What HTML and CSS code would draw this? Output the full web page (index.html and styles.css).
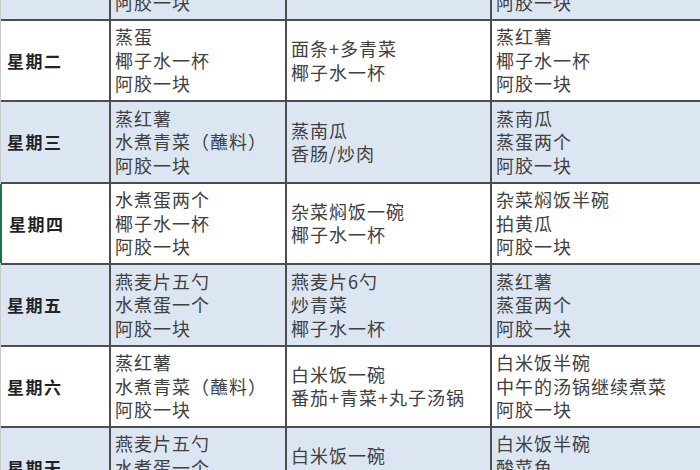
FILE: index.html
```html
<!DOCTYPE html>
<html lang="zh">
<head>
<meta charset="utf-8">
<title>一周饮食表</title>
<link rel="stylesheet" href="styles.css">
</head>
<body>
<div class="sheet">
  <div class="row blue">
    <div class="cell day">星期一</div>
    <div class="cell"><span>水煮蛋一个</span><span>椰子水一杯</span><span>阿胶一块</span></div>
    <div class="cell"><span>白米饭一碗</span><span>番茄炒蛋</span></div>
    <div class="cell"><span>蒸红薯</span><span>蒸蛋两个</span><span>阿胶一块</span></div>
  </div>
  <div class="row">
    <div class="cell day">星期二</div>
    <div class="cell"><span>蒸蛋</span><span>椰子水一杯</span><span>阿胶一块</span></div>
    <div class="cell"><span>面条+多青菜</span><span>椰子水一杯</span></div>
    <div class="cell"><span>蒸红薯</span><span>椰子水一杯</span><span>阿胶一块</span></div>
  </div>
  <div class="row blue">
    <div class="cell day">星期三</div>
    <div class="cell"><span>蒸红薯</span><span>水煮青菜（蘸料）</span><span>阿胶一块</span></div>
    <div class="cell"><span>蒸南瓜</span><span>香肠/炒肉</span></div>
    <div class="cell"><span>蒸南瓜</span><span>蒸蛋两个</span><span>阿胶一块</span></div>
  </div>
  <div class="row">
    <div class="cell day active">星期四</div>
    <div class="cell"><span>水煮蛋两个</span><span>椰子水一杯</span><span>阿胶一块</span></div>
    <div class="cell"><span>杂菜焖饭一碗</span><span>椰子水一杯</span></div>
    <div class="cell"><span>杂菜焖饭半碗</span><span>拍黄瓜</span><span>阿胶一块</span></div>
  </div>
  <div class="row blue">
    <div class="cell day">星期五</div>
    <div class="cell"><span>燕麦片五勺</span><span>水煮蛋一个</span><span>阿胶一块</span></div>
    <div class="cell"><span>燕麦片6勺</span><span>炒青菜</span><span>椰子水一杯</span></div>
    <div class="cell"><span>蒸红薯</span><span>蒸蛋两个</span><span>阿胶一块</span></div>
  </div>
  <div class="row">
    <div class="cell day">星期六</div>
    <div class="cell"><span>蒸红薯</span><span>水煮青菜（蘸料）</span><span>阿胶一块</span></div>
    <div class="cell"><span>白米饭一碗</span><span>番茄+青菜+丸子汤锅</span></div>
    <div class="cell"><span>白米饭半碗</span><span>中午的汤锅继续煮菜</span><span>阿胶一块</span></div>
  </div>
  <div class="row blue">
    <div class="cell day">星期天</div>
    <div class="cell"><span>燕麦片五勺</span><span>水煮蛋一个</span><span>阿胶一块</span></div>
    <div class="cell"><span>白米饭一碗</span><span>酸菜鱼</span></div>
    <div class="cell"><span>白米饭半碗</span><span>酸菜鱼</span><span>阿胶一块</span></div>
  </div>
</div>
</body>
</html>
```

FILE: styles.css
```css
html, body {
  margin: 0;
  padding: 0;
  background: #ffffff;
  overflow: hidden;
}

body {
  width: 700px;
  height: 470px;
  font-family: "Noto Sans CJK SC", "Noto Sans", sans-serif;
}

.sheet {
  margin-top: -60.4px;
  width: 720px;
  border-left: 1px solid #c9c9c9;
}

.row {
  display: grid;
  grid-template-columns: 110px 176px 205px 1fr;
  height: 81.4px;
  box-sizing: border-box;
  border-bottom: 2px solid #4d4d4d;
  background: #ffffff;
}

.row.blue {
  background: #dce6f2;
}

.cell {
  display: flex;
  flex-direction: column;
  justify-content: center;
  box-sizing: border-box;
  border-right: 2px solid #4d4d4d;
  padding: 0 4px 0 4px;
  font-size: 18px;
  line-height: 23.5px;
  letter-spacing: 1px;
  color: #404040;
  white-space: nowrap;
  overflow: hidden;
}

.cell:last-child {
  border-right: none;
}

.cell.day {
  padding-left: 6px;
  font-weight: bold;
  font-size: 17px;
  color: #222222;
  letter-spacing: 1.5px;
}

.cell.day.active {
  border-left: 2px solid #1f7244;
  margin-left: -1px;
  padding-left: 7px;
}
```
